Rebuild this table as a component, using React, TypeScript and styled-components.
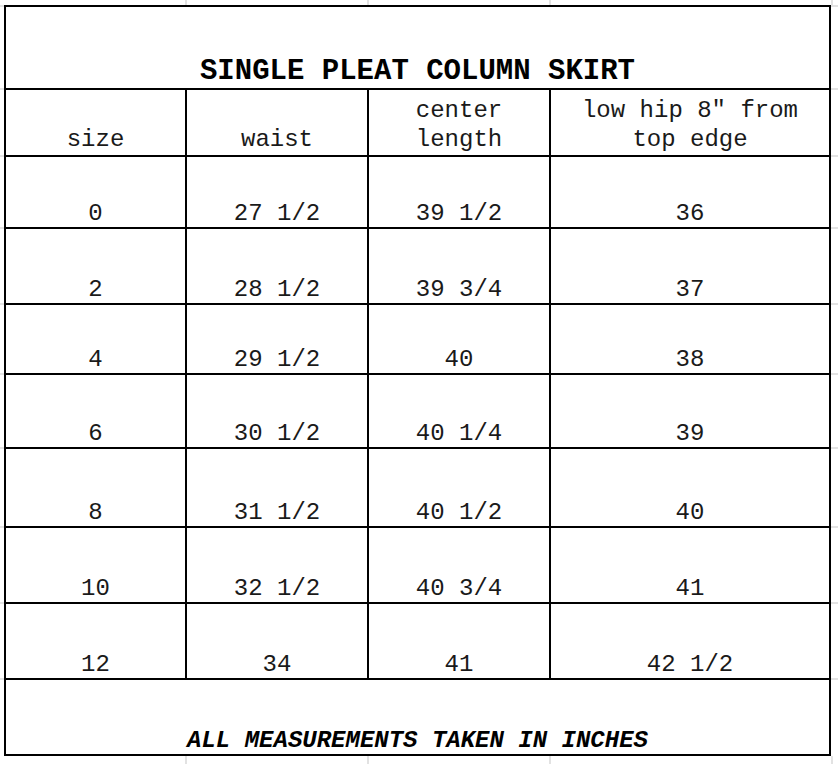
import styled, { createGlobalStyle } from 'styled-components'

const GlobalStyle = createGlobalStyle`
  html, body {
    margin: 0;
    padding: 0;
    background: #fff;
  }
`

interface SizeRow {
  size: string
  waist: string
  length: string
  hip: string
  height: number
}

const sizes: SizeRow[] = [
  { size: '0', waist: '27 1/2', length: '39 1/2', hip: '36', height: 72 },
  { size: '2', waist: '28 1/2', length: '39 3/4', hip: '37', height: 76 },
  { size: '4', waist: '29 1/2', length: '40', hip: '38', height: 70 },
  { size: '6', waist: '30 1/2', length: '40 1/4', hip: '39', height: 74 },
  { size: '8', waist: '31 1/2', length: '40 1/2', hip: '40', height: 79 },
  { size: '10', waist: '32 1/2', length: '40 3/4', hip: '41', height: 76 },
  { size: '12', waist: '34', length: '41', hip: '42 1/2', height: 76 },
]

// cells wrap the way the sheet did
const headers = ['size', 'waist', 'center\nlength', 'low hip 8" from\ntop edge']

const MONO = `"Liberation Mono", "Courier New", monospace`
const GRID = '#e2e2e2'
const INK = '#000'

const App = () => {
  const rowTracks = ['5px', '83px', '67px', ...sizes.map((r) => `${r.height}px`), '78px', '1fr']

  return (
    <>
      <GlobalStyle />
      <Sheet style={{ gridTemplateRows: rowTracks.join(' ') }}>
        {/* top gutter */}
        <Gutter />
        {[0, 1, 2, 3, 4].map((i) => (
          <Gutter key={`t${i}`} $edge={i === 0 ? 'none' : 'left'} />
        ))}

        {/* title */}
        <Gutter $edge="top" />
        <Cell $span={4} $right>
          <Title>SINGLE PLEAT COLUMN SKIRT</Title>
        </Cell>
        <Gutter $edge="top" />

        {/* column headings */}
        <Gutter $edge="top" />
        {headers.map((h, i) => (
          <Cell key={h} $right={i === headers.length - 1}>
            <Heading>{h}</Heading>
          </Cell>
        ))}
        <Gutter $edge="top" />

        {sizes.map((r) => (
          <Row key={r.size} row={r} />
        ))}

        {/* note */}
        <Gutter $edge="top" />
        <Cell $span={4} $right $bottom>
          <Note>ALL MEASUREMENTS TAKEN IN INCHES</Note>
        </Cell>
        <Gutter $edge="top" />

        {/* bottom gutter */}
        <Gutter />
        {[0, 1, 2, 3, 4].map((i) => (
          <Gutter key={`b${i}`} $edge={i === 0 ? 'none' : 'left'} />
        ))}
      </Sheet>
    </>
  )
}

const Row = ({ row }: { row: SizeRow }) => {
  return (
    <>
      <Gutter $edge="top" />
      <Cell>
        <Value>{row.size}</Value>
      </Cell>
      <Cell>
        <Value>{row.waist}</Value>
      </Cell>
      <Cell>
        <Value>{row.length}</Value>
      </Cell>
      <Cell $right>
        <Value>{row.hip}</Value>
      </Cell>
      <Gutter $edge="top" />
    </>
  )
}

export default App

const Sheet = styled.div`
  display: grid;
  grid-template-columns: 4px 181px 182px 182px 282px 1fr;
  width: 100%;
  min-height: 100vh;
  background: #fff;
`

// empty spreadsheet cells outside the bordered table
const Gutter = styled.div<{ $edge?: 'top' | 'left' | 'none' }>`
  box-sizing: border-box;
  border-top: ${(p) => (p.$edge === 'top' ? `2px solid ${GRID}` : '0')};
  border-left: ${(p) => (p.$edge === 'left' ? `2px solid ${GRID}` : '0')};
`

const Cell = styled.div<{ $span?: number; $right?: boolean; $bottom?: boolean }>`
  box-sizing: border-box;
  grid-column: span ${(p) => p.$span ?? 1};
  display: flex;
  align-items: flex-end;
  justify-content: center;
  text-align: center;
  overflow: hidden;
  border-top: 2px solid ${INK};
  border-left: 2px solid ${INK};
  border-right: ${(p) => (p.$right ? `2px solid ${INK}` : '0')};
  border-bottom: ${(p) => (p.$bottom ? `2px solid ${INK}` : '0')};
  font-family: ${MONO};
  color: ${INK};
`

const Title = styled.div`
  font-size: 29px;
  font-weight: 700;
  line-height: normal;
`

const Heading = styled.div`
  font-size: 24px;
  line-height: 1.2;
  white-space: pre-line;
  color: #1a1a1a;
`

const Value = styled.div`
  font-size: 24px;
  line-height: normal;
  color: #1a1a1a;
`

const Note = styled.div`
  font-size: 24px;
  font-weight: 700;
  font-style: italic;
  line-height: normal;
`
